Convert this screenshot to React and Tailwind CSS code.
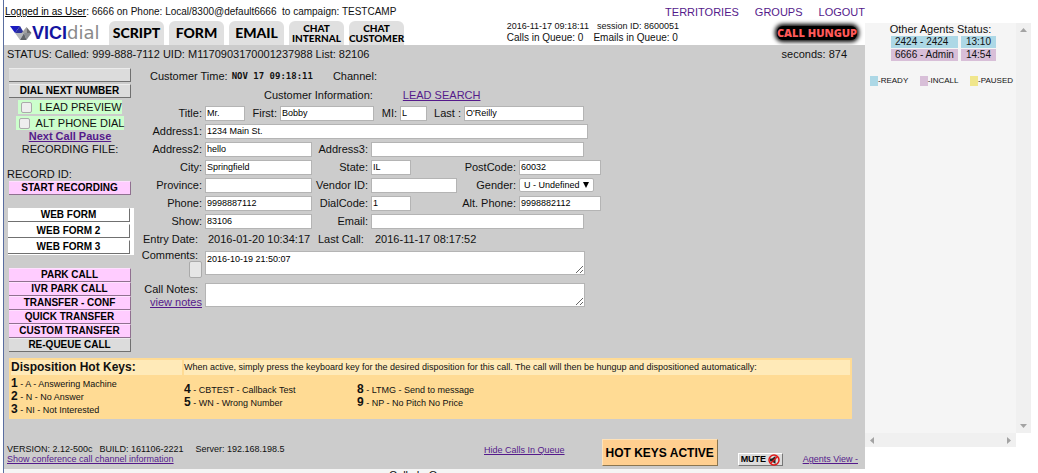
import React from "react";

const inputBase =
  "h-[15px] border border-[#b4b4b4] bg-white px-px text-[9px] leading-3 text-black outline-none";

function Label({ htmlFor, className, children }) {
  return (
    <label htmlFor={htmlFor} className={`whitespace-nowrap text-right ${className || ""}`}>
      {children}
    </label>
  );
}

function Field({ id, value, className }) {
  return <input id={id} type="text" defaultValue={value} className={`${inputBase} ${className}`} />;
}

function Row({ children }) {
  return <div className="flex h-[18px] items-center gap-[3px]">{children}</div>;
}

function SideButton({ className, children, ...rest }) {
  return (
    <button
      type="button"
      className={`block h-[14px] w-full whitespace-nowrap border-b border-r border-t text-center text-[10px] font-bold leading-3 text-black ${className}`}
      {...rest}
    >
      {children}
    </button>
  );
}

function Logo() {
  return (
    <div className="flex items-center" aria-label="VICIdial">
      <svg width="22" height="16" viewBox="0 0 22 16" aria-hidden="true">
        <path d="M0 1h10L5 8z" fill="#1c1cc0" />
        <path d="M10 1l4 7H5z" fill="#2a2f9c" />
        <path d="M5 8h9l-4 7z" fill="#b4b7bb" />
        <path d="M16.500 2L11.500 8h5z" fill="#a2a2a2" />
        <path d="M16.500 2l5 6h-5z" fill="#6d6d6d" />
        <path d="M14 8h7.500L16.500 15z" fill="#8c8f93" />
        <path d="M10 15l4-7 2.500 7z" fill="#606468" />
      </svg>
      <span className="text-[18px] font-bold leading-5 text-[#1414a0]">VICI</span>
      <span className="font-['DejaVu_Sans'] text-[18px] leading-5 text-[#8a8a8a]">dial</span>
    </div>
  );
}

function Tab({ lines }) {
  const size = lines.length > 1 ? "text-[10px] leading-[10px]" : "text-[14px] leading-5";
  return (
    <button
      type="button"
      className={`flex h-6 w-[55px] flex-col items-center justify-center whitespace-nowrap rounded-t-md bg-[#e0e0e0] font-['Lato'] font-black text-black ${size}`}
    >
      {lines.map((l) => (
        <span key={l}>{l}</span>
      ))}
    </button>
  );
}

function HotKey({ k, children }) {
  return (
    <li className="h-[13px] whitespace-nowrap leading-[13px]">
      <b className="text-xs leading-[13px]">{k}</b> - {children}
    </li>
  );
}

function Sidebar() {
  const gray = "border-b-[#707070] border-r-[#707070] border-t-[#ececec] bg-[#dcdcdc]";
  const pink = "border-b-[#907090] border-r-[#907090] border-t-[#ffe0ff] bg-[#ffccff]";
  const box = "size-[11px] appearance-none rounded-[2px] border border-[#aaa] bg-[#eee]";
  return (
    <aside className="w-[122px] shrink-0">
      <div className="flex flex-col gap-[2px]">
        <SideButton className={gray} aria-label="Empty action" />
        <SideButton className={gray}>DIAL NEXT NUMBER</SideButton>
      </div>
      <div className="flex flex-col items-center pt-[2px]">
        <label className="mb-[2px] flex h-[14px] items-center gap-[7px] bg-[#ccffcc] pl-[3px]">
          <input type="checkbox" className={box} />
          LEAD PREVIEW
        </label>
        <label className="flex h-[14px] items-center gap-[6px] bg-[#ccffcc] pl-[3px]">
          <input type="checkbox" className={box} />
          ALT PHONE DIAL
        </label>
        <a href="#pause" className="h-3 font-bold leading-3 text-[#551a8b] underline">
          Next Call Pause
        </a>
        <span className="h-[26px] leading-[14px]">RECORDING FILE:</span>
      </div>
      <div className="-ml-[2px] h-[13px] leading-3">RECORD ID:</div>
      <SideButton className={pink}>START RECORDING</SideButton>
      <div className="-ml-px mt-[13px] flex w-[126px] flex-col gap-[2px] bg-white pr-[4px] pb-px">
        {["WEB FORM", "WEB FORM 2", "WEB FORM 3"].map((t) => (
          <SideButton key={t} className="border-b-[#707070] border-r-[#707070] border-t-white bg-white">
            {t}
          </SideButton>
        ))}
      </div>
      <div className="mt-[13px]">
        {["PARK CALL", "IVR PARK CALL", "TRANSFER - CONF", "QUICK TRANSFER", "CUSTOM TRANSFER"].map((t) => (
          <SideButton key={t} className={pink}>
            {t}
          </SideButton>
        ))}
        <SideButton className={gray}>RE-QUEUE CALL</SideButton>
      </div>
    </aside>
  );
}

function CustomerForm() {
  return (
    <form className="w-[470px] shrink-0">
      <div className="flex h-[18px] items-center pl-[19px]">
        <span>Customer Time:</span>
        <b className="ml-1 font-['DejaVu_Sans_Mono'] text-[9px]">NOV 17 09:18:11</b>
        <span className="ml-5">Channel:</span>
      </div>
      <div className="flex h-[19px] items-center gap-[30px] pl-[133px]">
        <span>Customer Information:</span>
        <a href="#search" className="text-[#551a8b] underline">
          LEAD SEARCH
        </a>
      </div>
      <Row>
        <Label htmlFor="title" className="w-[71px]">Title:</Label>
        <Field id="title" value="Mr." className="w-10" />
        <Label htmlFor="first" className="w-[29px]">First:</Label>
        <Field id="first" value="Bobby" className="w-[94px]" />
        <Label htmlFor="mi" className="w-5">MI:</Label>
        <Field id="mi" value="L" className="w-[27px]" />
        <Label htmlFor="last" className="w-[31px]">Last :</Label>
        <Field id="last" value="O'Reilly" className="w-[120px]" />
      </Row>
      <Row>
        <Label htmlFor="a1" className="w-[71px]">Address1:</Label>
        <Field id="a1" value="1234 Main St." className="w-[383px]" />
      </Row>
      <Row>
        <Label htmlFor="a2" className="w-[71px]">Address2:</Label>
        <Field id="a2" value="hello" className="w-[107px]" />
        <Label htmlFor="a3" className="w-[53px]">Address3:</Label>
        <Field id="a3" value="" className="w-[213px]" />
      </Row>
      <Row>
        <Label htmlFor="city" className="w-[71px]">City:</Label>
        <Field id="city" value="Springfield" className="w-[107px]" />
        <Label htmlFor="state" className="w-[53px]">State:</Label>
        <Field id="state" value="IL" className="w-10" />
        <Label htmlFor="zip" className="flex-1">PostCode:</Label>
        <Field id="zip" value="60032" className="w-[82px]" />
      </Row>
      <Row>
        <Label htmlFor="prov" className="w-[71px]">Province:</Label>
        <Field id="prov" value="" className="w-[107px]" />
        <Label htmlFor="vendor" className="w-[53px]">Vendor ID:</Label>
        <Field id="vendor" value="" className="w-[86px]" />
        <Label htmlFor="gender" className="flex-1">Gender:</Label>
        <div className="relative mr-[7px] w-[75px]">
          <select
            id="gender"
            className="block h-[14px] w-full appearance-none rounded-[2px] border border-[#b4b4b4] bg-white pl-[4px] text-[9px] leading-3 text-black"
          >
            <option>U - Undefined</option>
          </select>
          <svg className="pointer-events-none absolute right-[5px] top-1" width="6" height="6" viewBox="0 0 6 6" aria-hidden="true">
            <path d="M0 0h6L3 6z" fill="#000" />
          </svg>
        </div>
      </Row>
      <Row>
        <Label htmlFor="phone" className="w-[71px]">Phone:</Label>
        <Field id="phone" value="9998887112" className="w-[107px]" />
        <Label htmlFor="dial" className="w-[53px]">DialCode:</Label>
        <Field id="dial" value="1" className="w-10" />
        <Label htmlFor="alt" className="flex-1">Alt. Phone:</Label>
        <Field id="alt" value="9998882112" className="w-[82px]" />
      </Row>
      <Row>
        <Label htmlFor="show" className="w-[71px]">Show:</Label>
        <Field id="show" value="83106" className="w-[107px]" />
        <Label htmlFor="email" className="w-[53px]">Email:</Label>
        <Field id="email" value="" className="w-[213px]" />
      </Row>
      <div className="flex h-[17px] items-center whitespace-nowrap">
        <span className="w-[67px] text-right">Entry Date:</span>
        <span className="ml-[10px] w-[110px]">2016-01-20 10:34:17</span>
        <span className="w-[57px]">Last Call:</span>
        <span>2016-11-17 08:17:52</span>
      </div>
      <div className="flex h-8 items-start gap-[3px] pt-1">
        <div className="flex w-[71px] flex-col items-end leading-3">
          <Label htmlFor="comments" className="-mt-[2px] h-3 pr-1">Comments:</Label>
          <button
            type="button"
            aria-label="Expand comments"
            className="h-[17px] w-[13px] rounded-[2px] border border-[#aaa] bg-[#e6e6e6]"
          />
        </div>
        <textarea
          id="comments"
          defaultValue="2016-10-19 21:50:07"
          className="block h-6 w-[380px] border border-[#b4b4b4] bg-white px-px pt-px text-[9px] leading-3 text-black outline-none"
        />
      </div>
      <div className="flex h-7 items-start gap-[3px] pt-1">
        <div className="flex w-[71px] flex-col items-end leading-[13px]">
          <Label htmlFor="notes" className="pr-1">Call Notes:</Label>
          <a href="#notes" className="whitespace-nowrap text-[#551a8b] underline">
            view notes
          </a>
        </div>
        <textarea
          id="notes"
          className="block h-6 w-[380px] border border-[#b4b4b4] bg-white px-px text-[9px] leading-3 text-black outline-none"
        />
      </div>
    </form>
  );
}

function HotKeys() {
  return (
    <section className="ml-[5px] mr-[13px] mt-[6px] h-[61px] bg-[#ffdb94] p-[2px] text-[9px]">
      <div className="flex h-[15px] gap-[2px] leading-[15px]">
        <h2 className="w-[171px] bg-[#ffeab8] text-xs font-bold leading-[15px]">Disposition Hot Keys:</h2>
        <p className="flex-1 whitespace-nowrap bg-[#ffeab8]">
          When active, simply press the keyboard key for the desired disposition for this call. The call will then be
          hungup and dispositioned automatically:
        </p>
      </div>
      <div className="flex h-[42px] items-center">
        <ul className="w-[173px]">
          <HotKey k="1">A - Answering Machine</HotKey>
          <HotKey k="2">N - No Answer</HotKey>
          <HotKey k="3">NI - Not Interested</HotKey>
        </ul>
        <ul className="w-[173px]">
          <HotKey k="4">CBTEST - Callback Test</HotKey>
          <HotKey k="5">WN - Wrong Number</HotKey>
        </ul>
        <ul>
          <HotKey k="8">LTMG - Send to message</HotKey>
          <HotKey k="9">NP - No Pitch No Price</HotKey>
        </ul>
      </div>
    </section>
  );
}

function Footer() {
  return (
    <footer className="mt-5 flex h-[30px] items-start whitespace-nowrap pl-[3px] pr-[7px] text-[9px]">
      <div className="w-[477px] pt-[5px] leading-[10px]">
        <div className="flex">
          <span>VERSION: 2.12-500c</span>
          <span className="ml-[7px]">BUILD: 161106-2221</span>
          <span className="ml-3">Server: 192.168.198.5</span>
        </div>
        <a href="#conf" className="text-[#551a8b] underline">
          Show conference call channel information
        </a>
      </div>
      <a href="#queue" className="mt-[6px] leading-[10px] text-[#551a8b] underline">
        Hide Calls In Queue
      </a>
      <button
        type="button"
        className="ml-auto h-[27px] w-[116px] whitespace-nowrap border border-b-[#8a7550] border-l-[#ffe2b8] border-r-[#8a7550] border-t-[#ffe2b8] bg-[#ffcf90] text-xs font-bold leading-5 text-black"
      >
        HOT KEYS ACTIVE
      </button>
      <button
        type="button"
        className="ml-5 mt-[14px] flex h-[13px] w-[45px] items-center justify-between border border-b-[#777] border-l-white border-r-[#777] border-t-white bg-[#dcdcdc] px-[2px] text-[9px] font-bold leading-[11px] text-black"
      >
        MUTE
        <svg className="shrink-0" width="12" height="12" viewBox="0 0 12 12" aria-hidden="true">
          <path d="M2 4.500h2L7.500 2v8L4 7.500H2z" fill="#222" />
          <circle cx="6" cy="6" r="5" fill="none" stroke="#e01818" strokeWidth="1.500" />
          <path d="M2.500 9.500l7-7" stroke="#e01818" strokeWidth="1.500" />
        </svg>
      </button>
      <a href="#agents" className="ml-5 mt-[15px] leading-[10px] text-[#551a8b] underline">
        Agents View -
      </a>
    </footer>
  );
}

function AgentsPanel() {
  const legend = [
    ["READY", "bg-[#add8e6]"],
    ["INCALL", "bg-[#d8bfd8]"],
    ["PAUSED", "bg-[#f0e68c]"],
  ];
  return (
    <aside className="mr-[7px] mt-[23px] flex h-[424px] w-[166px] shrink-0 flex-col">
      <div className="flex flex-1">
        <div className="flex-1 bg-[#f5f5f5]">
          <h2 className="text-center leading-3">Other Agents Status:</h2>
          <table className="ml-[23px] border-separate border-spacing-x-[3px] border-spacing-y-px text-[10px] leading-3">
            <tbody>
              <tr className="bg-[#add8e6]">
                <td className="whitespace-nowrap px-[4px]">2424 - 2424</td>
                <td className="px-[5px]">13:10</td>
              </tr>
              <tr className="bg-[#d8bfd8]">
                <td className="whitespace-nowrap px-[4px]">6666 - Admin</td>
                <td className="px-[5px]">14:54</td>
              </tr>
            </tbody>
          </table>
          <ul className="mt-[14px] flex justify-between pl-[5px] pr-[3px] text-[8px] leading-[10px]">
            {legend.map(([t, c]) => (
              <li key={t} className="flex">
                <span className={`h-[10px] w-2 ${c}`} />-{t}
              </li>
            ))}
          </ul>
        </div>
        <div className="flex w-[15px] flex-col items-center justify-between bg-[#f0f0f0] py-[5px]">
          <svg width="7" height="4" viewBox="0 0 7 4" aria-hidden="true">
            <path d="M0 4h7L3.500 0z" fill="#a3a3a3" />
          </svg>
          <svg width="7" height="4" viewBox="0 0 7 4" aria-hidden="true">
            <path d="M0 0h7L3.500 4z" fill="#a3a3a3" />
          </svg>
        </div>
      </div>
      <div className="mr-[15px] flex h-[14px] items-center justify-between bg-[#f0f0f0] px-[5px]">
        <svg width="4" height="7" viewBox="0 0 4 7" aria-hidden="true">
          <path d="M4 0v7L0 3.500z" fill="#a3a3a3" />
        </svg>
        <svg width="4" height="7" viewBox="0 0 4 7" aria-hidden="true">
          <path d="M0 0v7l4-3.500z" fill="#a3a3a3" />
        </svg>
      </div>
    </aside>
  );
}

export default function App() {
  return (
    <div className="flex h-screen overflow-hidden bg-white pl-[3px] font-['Liberation_Sans',sans-serif] text-[11px] leading-[14px] text-[#111]">
      <div className="flex min-w-0 flex-1 flex-col border-l border-[#5a6ea0]">
        <nav className="flex h-[21px] shrink-0 items-end justify-between whitespace-nowrap">
          <p className="pb-[2px] pl-px text-[10px]">
            <a href="#user" className="text-black underline">Logged in as User</a>: 6666 on Phone:
            Local/8300@default6666&nbsp; to campaign: TESTCAMP
          </p>
          <div className="flex gap-4 pb-[2px] text-[#551a8b]">
            <a href="#territories">TERRITORIES</a>
            <a href="#groups">GROUPS</a>
            <a href="#logout">LOGOUT</a>
          </div>
        </nav>
        <header className="flex h-6 shrink-0 items-end whitespace-nowrap">
          <div className="w-[105px] pb-[2px] pl-[6px]">
            <Logo />
          </div>
          <div className="flex gap-[5px]">
            <Tab lines={["SCRIPT"]} />
            <Tab lines={["FORM"]} />
            <Tab lines={["EMAIL"]} />
            <Tab lines={["CHAT", "INTERNAL"]} />
            <Tab lines={["CHAT", "CUSTOMER"]} />
          </div>
          <div className="ml-auto mr-[98px] pb-[2px] text-[10px] leading-[11px]">
            <div className="flex gap-2 text-[9px]">
              <span>2016-11-17 09:18:11</span>
              <span>session ID: 8600051</span>
            </div>
            <div className="flex gap-[10px]">
              <span>Calls in Queue: 0</span>
              <span>Emails in Queue: 0</span>
            </div>
          </div>
          <button
            type="button"
            className="mb-[5px] mr-2 flex h-[14px] w-20 items-center justify-center rounded-md bg-black font-['Open_Sans'] text-[11px] font-extrabold leading-[14px] text-[#ff5a5a] shadow-[0_0_4px_2px_#000]"
          >
            CALL HUNGUP
          </button>
        </header>
        <main className="shrink-0 bg-[#cccccc]">
          <div className="flex h-[18px] items-center justify-between pl-[3px] pr-[18px]">
            <span>STATUS: Called: 999-888-7112 UID: M1170903170001237988 List: 82106</span>
            <span>seconds: 874</span>
          </div>
          <div className="flex pl-[5px]">
            <div className="pt-[5px]">
              <Sidebar />
            </div>
            <div className="pt-1">
              <CustomerForm />
            </div>
          </div>
          <HotKeys />
          <Footer />
        </main>
        <section className="mr-[15px] shrink-0 bg-[#f5f5f5] text-center leading-3">
          <h2 className="h-3">Calls In Queue:</h2>
        </section>
      </div>
      <AgentsPanel />
    </div>
  );
}
